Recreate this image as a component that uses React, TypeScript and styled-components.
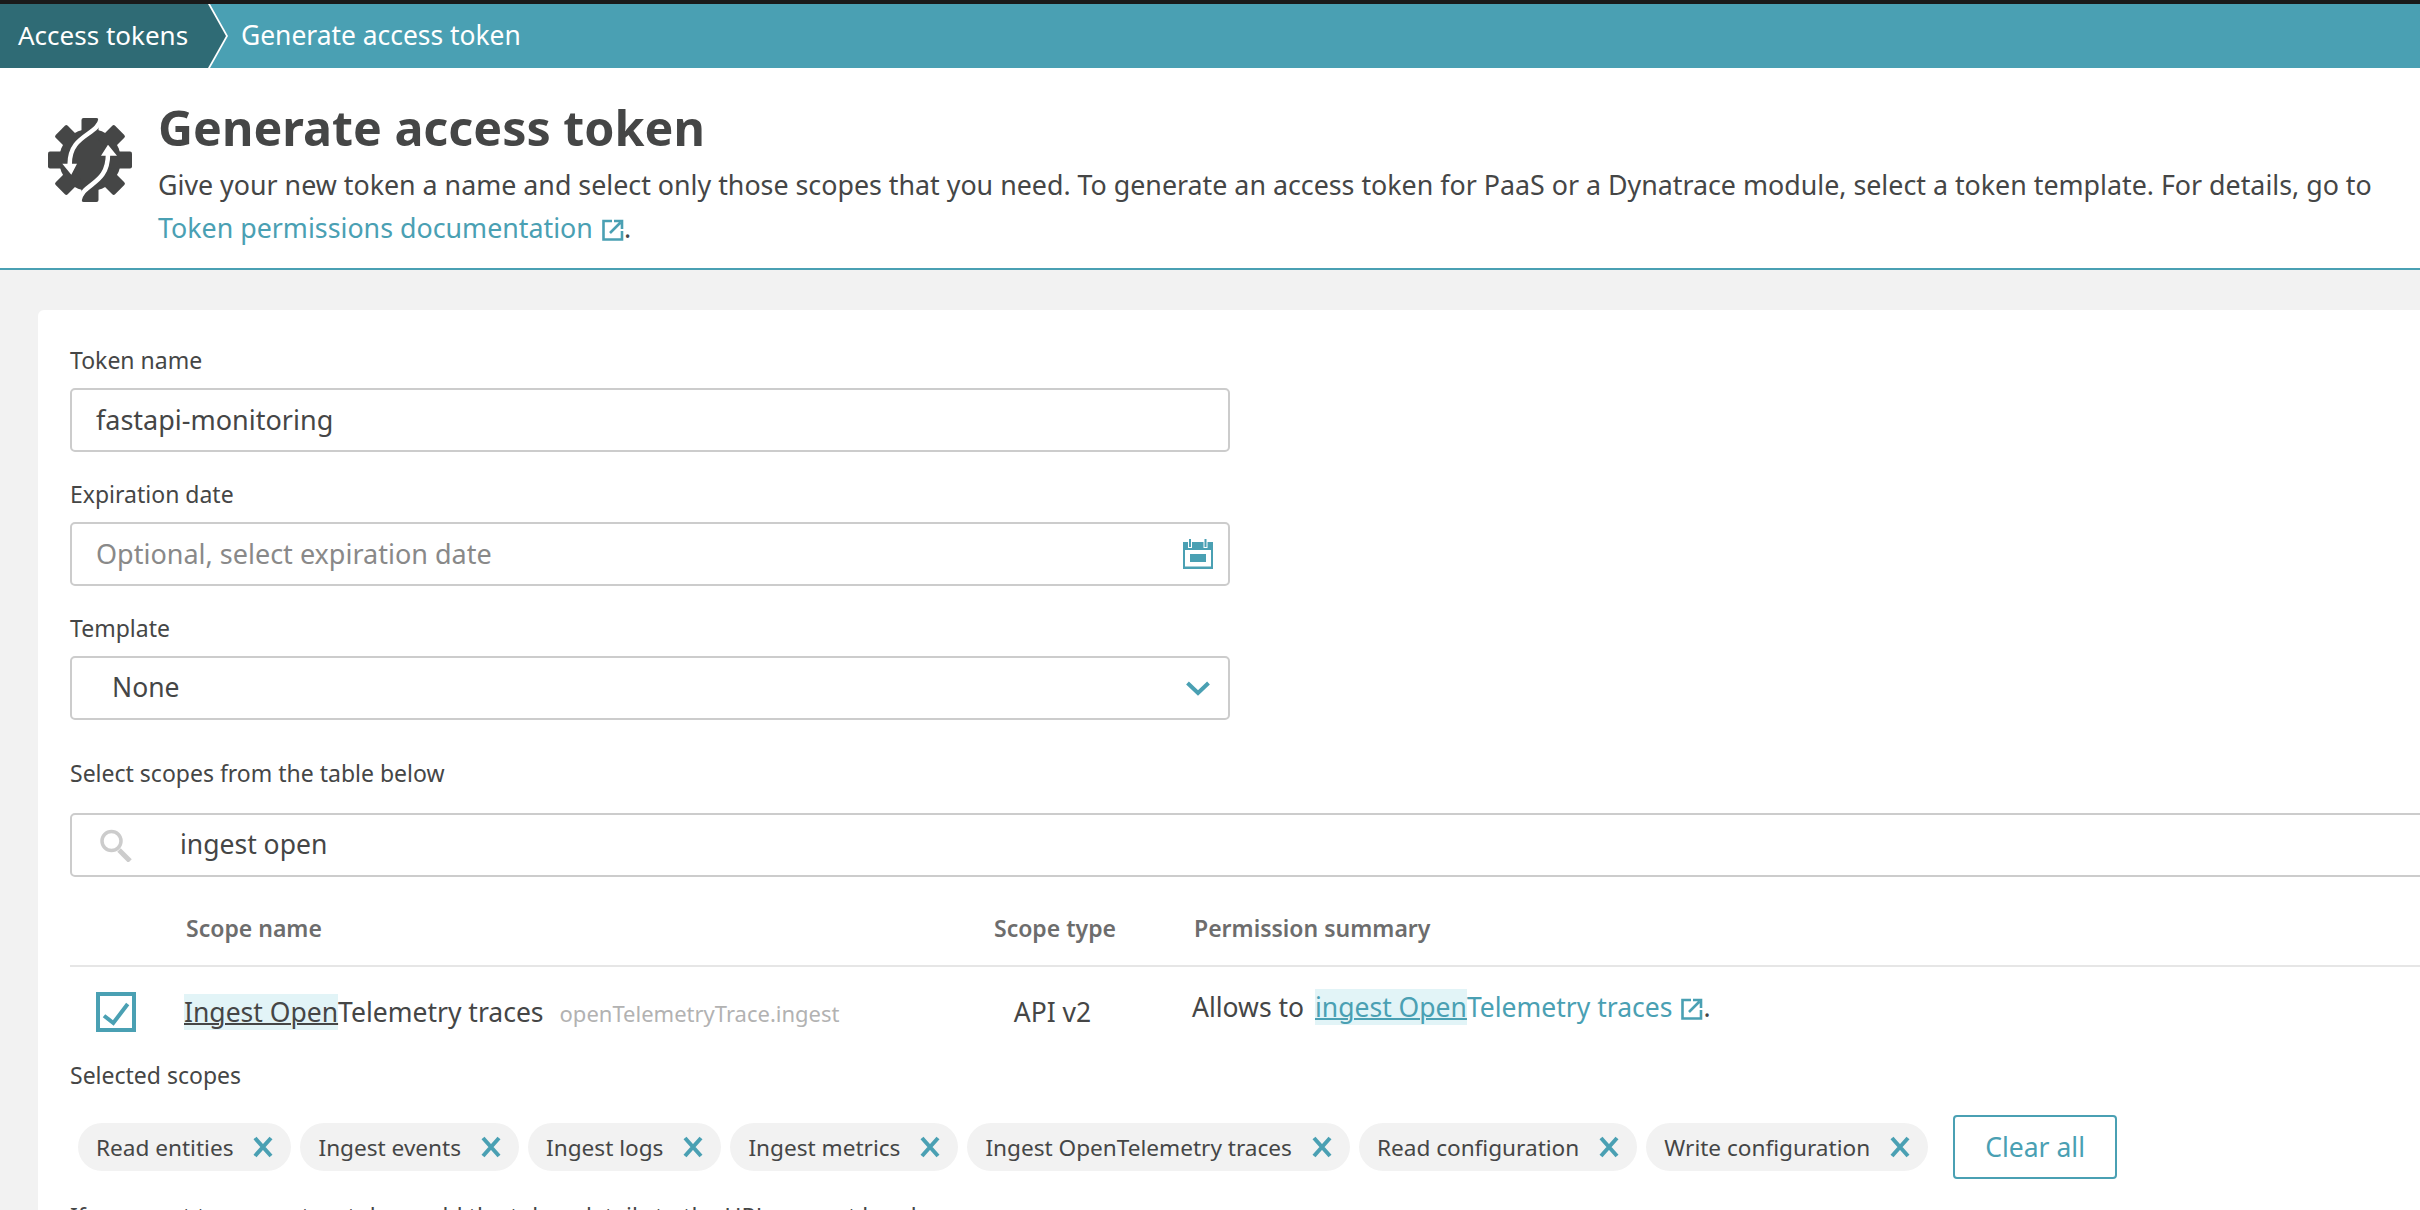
import React from "react";
import styled, { createGlobalStyle } from "styled-components";

const teal = "#4aa0b3";
const ink = "#454646";

const GlobalStyle = createGlobalStyle`
  html, body {
    margin: 0;
    padding: 0;
    background: #f2f2f2;
    overflow: hidden;
  }
  body {
    font-family: "Noto Sans", "Open Sans", sans-serif;
    color: ${ink};
  }
`;

const Page = styled.div`
  width: 2420px;
  height: 1210px;
  overflow: hidden;
  display: flex;
  flex-direction: column;
  border-top: 4px solid #1a1a1a;
  box-sizing: border-box;
`;

const Breadcrumbs = styled.nav`
  height: 64px;
  flex: none;
  display: flex;
  align-items: center;
  background: ${teal};
  color: #fff;
  font-size: 26.4px;
`;

const CrumbParent = styled.div`
  height: 64px;
  width: 226px;
  padding: 0 0 3px 18px;
  box-sizing: border-box;
  display: flex;
  align-items: center;
  background: #2f6b75;
  font-size: 26px;
  clip-path: polygon(0 0, 208px 0, 226px 32px, 208px 64px, 0 64px);
`;

const CrumbSeparator = styled.svg`
  width: 22px;
  height: 64px;
  flex: none;
  margin-left: -20px;
`;

const CrumbCurrent = styled.span`
  margin: 0 0 3px 13px;
`;

const Header = styled.header`
  flex: none;
  height: 202px;
  box-sizing: border-box;
  background: #fff;
  border-bottom: 2px solid ${teal};
  display: flex;
  padding: 27px 0 0 48px;
`;

const HeaderIcon = styled.svg`
  width: 84px;
  height: 84px;
  flex: none;
  margin: 23px 26px 0 0;
`;

const HeaderText = styled.div`
  font-size: 26.8px;
  line-height: 43px;
  color: ${ink};
  width: 2240px;
`;

const Title = styled.h1`
  margin: 0 0 4px;
  font-size: 48.4px;
  line-height: 64px;
  font-weight: 700;
  color: ${ink};
`;

const DocLink = styled.a`
  color: ${teal};
  text-decoration: none;
`;

const SummaryLink = styled(DocLink)`
  margin-left: 4px;
`;

const Card = styled.main`
  flex: 1;
  background: #fff;
  margin: 40px 0 0 38px;
  padding: 35px 0 0 32px;
  border-radius: 6px 0 0 0;
`;

const FieldLabel = styled.label`
  display: block;
  font-size: 23px;
  line-height: 30px;
  margin-bottom: 13px;
`;

const Field = styled.div<{ $wide?: boolean }>`
  display: flex;
  align-items: center;
  justify-content: space-between;
  box-sizing: border-box;
  width: ${(p) => (p.$wide ? "2400px" : "1160px")};
  height: 64px;
  border: 2px solid #cccccc;
  border-radius: 5px;
  padding: 0 15px 2px 24px;
  font-size: 27px;
  margin-bottom: 27px;
`;

const Placeholder = styled.span`
  color: #898989;
`;

const SelectValue = styled.span`
  padding-left: 16px;
  font-size: 26.5px;
`;

const Chevron = styled.svg`
  width: 24px;
  height: 15px;
  margin: 2px 3px 0 0;
`;

const CalendarIcon = styled.svg`
  width: 30px;
  height: 30px;
  margin-top: 2px;
`;

const SearchIcon = styled.svg`
  width: 33px;
  height: 33px;
  margin: 2px 47px 0 0;
  flex: none;
`;

const SearchRow = styled(Field)`
  justify-content: flex-start;
  margin-bottom: 0;
  padding-left: 28px;
  font-size: 26.5px;
`;

const ScopesLabel = styled(FieldLabel)`
  margin: 38px 0 25px;
`;

const columns = "116px 730px 278px 1fr";

const TableHead = styled.div`
  display: grid;
  grid-template-columns: ${columns};
  align-items: center;
  box-sizing: border-box;
  height: 90px;
  padding-top: 14px;
  border-bottom: 2px solid #e6e6e6;
  font-size: 23px;
  font-weight: 600;
  color: #6d6d6d;
  width: 2400px;
`;

const HeadCell = styled.div<{ $center?: boolean }>`
  text-align: ${(p) => (p.$center ? "center" : "left")};
`;

const TableRow = styled.div`
  display: grid;
  grid-template-columns: ${columns};
  align-items: center;
  height: 90px;
  margin-bottom: 3px;
  font-size: 26.5px;
`;

const Checkbox = styled.span`
  display: flex;
  box-sizing: border-box;
  width: 40px;
  height: 40px;
  margin-left: 26px;
  border: 4px solid ${teal};
`;

const NameCell = styled.div`
  margin-left: -2px;
  white-space: nowrap;
`;

const TypeCell = styled.div`
  text-align: center;
  padding-right: 5px;
`;

const SummaryCell = styled.div`
  margin-left: -2px;
  padding-bottom: 10px;
`;

const Highlight = styled.mark`
  background: #e2f4f7;
  color: inherit;
  text-decoration: underline;
  text-decoration-thickness: 2px;
`;

const ScopeId = styled.span`
  margin-left: 16px;
  font-size: 22px;
  color: #b2b2b2;
`;

const ExternalIcon = styled.svg`
  width: 22px;
  height: 22px;
  margin-left: 9px;
  vertical-align: -3px;
`;

const SelectedLabel = styled.div`
  font-size: 23px;
  line-height: 30px;
  margin-bottom: 25px;
`;

const ChipRow = styled.div`
  display: flex;
  align-items: center;
  gap: 9px;
  padding-left: 8px;
`;

const Chip = styled.span`
  display: flex;
  align-items: center;
  gap: 19px;
  height: 48px;
  padding: 0 17px 0 18px;
  background: #f2f2f2;
  border-radius: 24px;
  font-size: 22.6px;
`;

const ClearButton = styled.button`
  width: 164px;
  height: 64px;
  margin-left: 16px;
  background: #fff;
  border: 2px solid ${teal};
  border-radius: 4px;
  color: ${teal};
  font: inherit;
  font-size: 26.5px;
`;

const FootNote = styled.p`
  margin: 22px 0 0;
  font-size: 23px;
  line-height: 30px;
`;

const CloseMark = () => (
  <svg width="22" height="22" viewBox="0 0 22 22" fill="none" stroke={teal} strokeWidth="4">
    <path d="M3 2 L19 20 M19 2 L3 20" />
  </svg>
);

const External = () => (
  <ExternalIcon viewBox="0 0 22 22" fill="none" stroke={teal} strokeWidth="2.6">
    <path d="M10 2 H1.5 V20.5 H20 V12" />
    <path d="M8 14 L18.5 3.5 M12 2 H20 V10" />
  </ExternalIcon>
);

const GearIcon = () => (
  <HeaderIcon viewBox="0 0 84 84">
    <circle cx="42" cy="42" r="31" fill={ink} />
    {[0, 45, 90, 135, 180, 225, 270, 315].map((angle) => (
      <rect key={angle} x="33.5" y="0" width="17" height="22" rx="2" fill={ink} transform={`rotate(${angle} 42 42)`} />
    ))}
    <g fill="none" stroke="#fff" strokeWidth="4.5">
      <path d="M53 0 C50 18 21.7 16 21.7 46" />
      <path d="M31 84 C34 64 60 68 60 36" />
    </g>
    <path fill="#fff" d="M14.3 45.7 H29 L23.3 56.7 Z M53 37.7 H69 L60 26.7 Z" />
    <path fill="#fff" d="M52 0 H62 L53 9 Z M32 84 H22 L31 75 Z" />
  </HeaderIcon>
);

const scopes = [
  "Read entities",
  "Ingest events",
  "Ingest logs",
  "Ingest metrics",
  "Ingest OpenTelemetry traces",
  "Read configuration",
  "Write configuration",
];

export default function App() {
  return (
    <Page>
      <GlobalStyle />
      <Breadcrumbs>
        <CrumbParent>Access tokens</CrumbParent>
        <CrumbSeparator viewBox="0 0 22 64" fill="none" stroke="#fff" strokeWidth="3.5">
          <path d="M2 0 L20 32 L2 64" />
        </CrumbSeparator>
        <CrumbCurrent>Generate access token</CrumbCurrent>
      </Breadcrumbs>
      <Header>
        <GearIcon />
        <HeaderText>
          <Title>Generate access token</Title>
          Give your new token a name and select only those scopes that you need. To generate an access token for PaaS or a Dynatrace module, select a token template. For details, go to
          <br />
          <DocLink href="#">
            Token permissions documentation
            <External />
          </DocLink>
          .
        </HeaderText>
      </Header>
      <Card>
        <FieldLabel>Token name</FieldLabel>
        <Field>fastapi-monitoring</Field>
        <FieldLabel>Expiration date</FieldLabel>
        <Field>
          <Placeholder>Optional, select expiration date</Placeholder>
          <CalendarIcon viewBox="0 0 30 30">
            <path fill={teal} d="M0 3 H30 V30 H0 Z" />
            <path fill="#fff" d="M2 11 H28 V27.5 H2 Z" />
            <path fill={teal} d="M7 15 H23 V23 H7 Z" />
            <path stroke="#fff" strokeWidth="4" d="M7 0 V9 M22.5 0 V9" />
            <path stroke={teal} strokeWidth="2" d="M7 0 V8 M22.5 0 V8" />
          </CalendarIcon>
        </Field>
        <FieldLabel>Template</FieldLabel>
        <Field>
          <SelectValue>None</SelectValue>
          <Chevron viewBox="0 0 24 15" fill="none" stroke={teal} strokeWidth="4">
            <path d="M1.5 2 L12 12 L22.5 2" />
          </Chevron>
        </Field>
        <ScopesLabel>Select scopes from the table below</ScopesLabel>
        <SearchRow $wide>
          <SearchIcon viewBox="0 0 33 33" fill="none" stroke="#cccccc">
            <circle cx="11.5" cy="12" r="9.5" strokeWidth="3.5" />
            <path d="M19 21 L30 32" strokeWidth="5" />
          </SearchIcon>
          ingest open
        </SearchRow>
        <TableHead>
          <span />
          <HeadCell>Scope name</HeadCell>
          <HeadCell $center>Scope type</HeadCell>
          <HeadCell>Permission summary</HeadCell>
        </TableHead>
        <TableRow>
          <Checkbox>
            <svg width="32" height="32" viewBox="0 0 32 32" fill="none" stroke={teal} strokeWidth="4">
              <path d="M4 19.7 L13.3 27 L27.7 8" />
            </svg>
          </Checkbox>
          <NameCell>
            <Highlight>Ingest Open</Highlight>Telemetry traces
            <ScopeId>openTelemetryTrace.ingest</ScopeId>
          </NameCell>
          <TypeCell>API v2</TypeCell>
          <SummaryCell>
            Allows to{" "}
            <SummaryLink href="#">
              <Highlight>ingest Open</Highlight>Telemetry traces
              <External />
            </SummaryLink>
            .
          </SummaryCell>
        </TableRow>
        <SelectedLabel>Selected scopes</SelectedLabel>
        <ChipRow>
          {scopes.map((s) => (
            <Chip key={s}>
              {s}
              <CloseMark />
            </Chip>
          ))}
          <ClearButton>Clear all</ClearButton>
        </ChipRow>
        <FootNote>If you want to generate a token, add the token details to the URL request headers</FootNote>
      </Card>
    </Page>
  );
}
